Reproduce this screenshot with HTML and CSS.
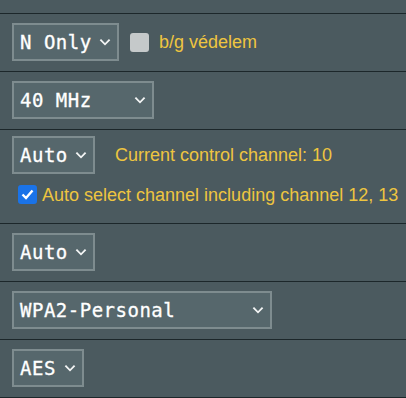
FILE: index.html
```html
<!DOCTYPE html>
<html lang="hu">
<head>
  <meta charset="UTF-8" />
  <meta name="viewport" content="width=device-width, initial-scale=1.0" />
  <title>Vezeték nélküli beállítások</title>
  <link rel="stylesheet" href="styles.css">
</head>
<body>
  <div class="panel">
    <div class="row row-top"></div>

    <div class="row">
      <div class="select w-mode">
        <span>N Only</span>
        <svg class="chev" viewBox="0 0 13 8"><polyline points="1.5,1.5 6.5,6.5 11.5,1.5" /></svg>
      </div>
      <span class="check off"></span>
      <span class="note">b/g védelem</span>
    </div>

    <div class="row">
      <div class="select w-band">
        <span>40 MHz</span>
        <svg class="chev" viewBox="0 0 13 8"><polyline points="1.5,1.5 6.5,6.5 11.5,1.5" /></svg>
      </div>
    </div>

    <div class="row row-channel">
      <div class="line">
        <div class="select w-auto">
          <span>Auto</span>
          <svg class="chev" viewBox="0 0 13 8"><polyline points="1.5,1.5 6.5,6.5 11.5,1.5" /></svg>
        </div>
        <span class="note current">Current control channel: 10</span>
      </div>
      <div class="line sub">
        <span class="check on">
          <svg viewBox="0 0 19 19"><polyline points="4.5,9.5 8,13 14.5,5.5" /></svg>
        </span>
        <span class="note">Auto select channel including channel 12, 13</span>
      </div>
    </div>

    <div class="row">
      <div class="select w-auto">
        <span>Auto</span>
        <svg class="chev" viewBox="0 0 13 8"><polyline points="1.5,1.5 6.5,6.5 11.5,1.5" /></svg>
      </div>
    </div>

    <div class="row">
      <div class="select w-auth">
        <span>WPA2-Personal</span>
        <svg class="chev" viewBox="0 0 13 8"><polyline points="1.5,1.5 6.5,6.5 11.5,1.5" /></svg>
      </div>
    </div>

    <div class="row">
      <div class="select w-aes">
        <span>AES</span>
        <svg class="chev" viewBox="0 0 13 8"><polyline points="1.5,1.5 6.5,6.5 11.5,1.5" /></svg>
      </div>
    </div>
  </div>
</body>
</html>
```

FILE: styles.css
```css
html, body {
  margin: 0;
  padding: 0;
  background-color: #4b5a5f;
}
body {
  font-family: "Liberation Sans", Arial, sans-serif;
  color: #fff;
  overflow: hidden;
}
.row {
  display: flex;
  align-items: center;
  padding: 9px 12px 10px;
  border-bottom: 1px solid #1c272a;
}
.row-top {
  height: 14px;
  padding: 0;
  box-sizing: border-box;
}
.row-channel {
  display: block;
  padding: 6px 12px 17px;
}
.line {
  display: flex;
  align-items: center;
  white-space: nowrap;
}
.line.sub {
  margin-top: 11px;
  padding-left: 6px;
}
.select {
  box-sizing: border-box;
  height: 38px;
  display: flex;
  align-items: center;
  padding: 0 6px 0 6px;
  background-color: #56676c;
  border: 2px solid #7e8c8f;
  font-family: "DejaVu Sans Mono", monospace;
  font-size: 19px;
  letter-spacing: 0.5px;
  -webkit-text-stroke: 0.3px #fff;
  white-space: pre;
  color: #fff;
  flex-shrink: 0;
}
.chev {
  width: 12px;
  height: 8px;
  margin-left: auto;
  fill: none;
  stroke: #f2f4f4;
  stroke-width: 2;
  flex-shrink: 0;
}
.w-mode { width: 107px; }
.w-band { width: 142px; }
.w-auto { width: 83px; }
.w-auth { width: 260px; }
.w-aes { width: 72px; }
.check {
  width: 19px;
  height: 19px;
  border-radius: 3px;
  flex-shrink: 0;
}
.check.off {
  background-color: #c5c9ca;
  margin-left: 11px;
}
.check.on {
  background-color: #1a73e8;
  margin-top: -3px;
}
.check svg {
  display: block;
  width: 19px;
  height: 19px;
  fill: none;
  stroke: #fff;
  stroke-width: 2.4;
}
.note {
  font-size: 18px;
  color: #eec53f;
  margin-left: 10px;
  white-space: nowrap;
}
.line.sub .note {
  margin-left: 5px;
}
.note.current {
  margin-left: 20px;
}
```
